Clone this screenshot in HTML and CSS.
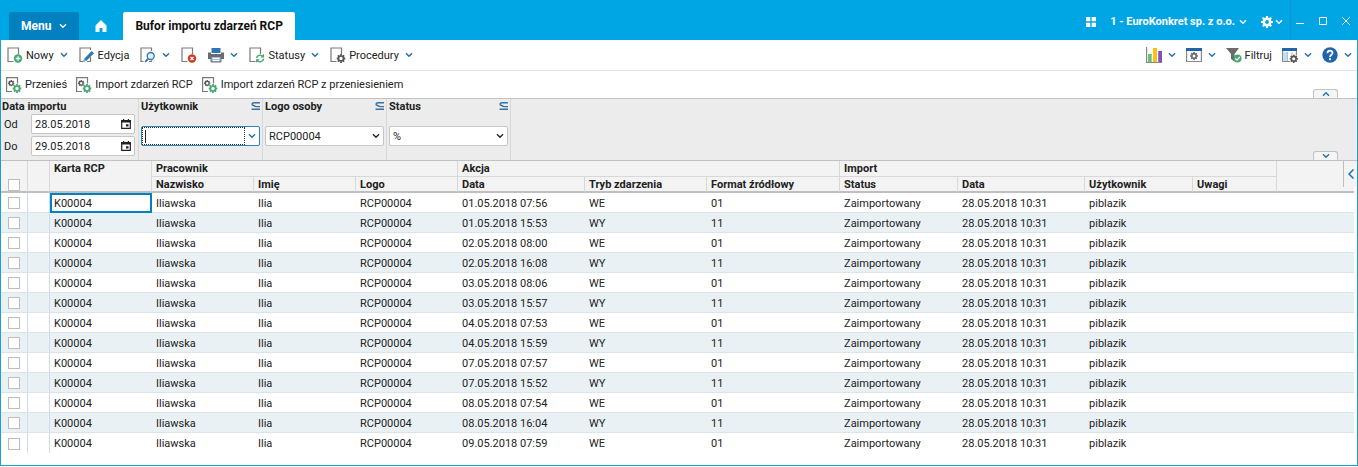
FILE: index.html
```html
<!DOCTYPE html>
<html lang="pl">
<head>
  <meta charset="UTF-8" />
  <meta name="viewport" content="width=device-width, initial-scale=1" />
  <title>Bufor importu zdarzeń RCP</title>
  <link rel="stylesheet" href="styles.css">
</head>
<body>

  <!-- Shared icons -->
  <svg class="sprite" aria-hidden="true">
    <symbol id="chevron" viewBox="0 0 8 6"><path d="M1 1.2 4 4.2 7 1.2" fill="none" stroke="currentColor" stroke-width="1.4" /></symbol>
    <symbol id="gear" viewBox="0 0 10 10">
      <path d="M5 0v2M5 8v2M0 5h2M8 5h2M1.500 1.500l1.500 1.500M7 7l1.500 1.500M8.500 1.500 7 3M3 7 1.500 8.500" stroke="currentColor" stroke-width="2" />
      <circle cx="5" cy="5" r="2.800" fill="#fff" stroke="currentColor" stroke-width="1.800" />
    </symbol>
    <symbol id="page" viewBox="0 0 16 16"><path d="M6.500 14.500H1V1h10.500v6" fill="none" stroke="#7a7a7a" stroke-width="1.200" /></symbol>
    <symbol id="process" viewBox="0 0 16 16">
      <path d="M6 14.500H.6V.6h10.900V6.500" fill="none" stroke="#7a7a7a" stroke-width="1.200" />
      <use href="#gear" x="2" y="3" width="6.500" height="6.500" color="#555" />
      <use href="#gear" x="6.500" y="7" width="9" height="9" color="#44a873" />
    </symbol>
    <symbol id="subset" viewBox="0 0 9 8"><path d="M9 .8H3C.5.8.5 3 2.500 3.500L5 4.600h4M.5 7.200H9" fill="none" stroke="#36719f" stroke-width="1.400" /></symbol>
  </svg>

  <div class="window">

    <header class="titlebar">
      <nav>
        <button class="menu">Menu <svg class="chevron"><use href="#chevron" /></svg></button>
        <a class="home" href="#" aria-label="Start">
          <svg width="12" height="12" viewBox="0 0 12 12"><path d="M6 0 .5 5.500V12h4V8h3v4h4V5.500z" fill="#fff" /></svg>
        </a>
        <a class="tab" href="#">Bufor importu zdarzeń RCP</a>
      </nav>
      <div class="account">
        <button aria-label="Aplikacje"><svg width="10" height="10" viewBox="0 0 10 10"><path d="M0 0h4.300v4.300H0zM5.700 0H10v4.300H5.700zM0 5.700h4.300V10H0zM5.700 5.700H10V10H5.700z" fill="#fff" /></svg></button>
        <button class="company">1 - EuroKonkret sp. z o.o. <svg class="chevron"><use href="#chevron" /></svg></button>
        <button class="settings" aria-label="Ustawienia">
          <svg width="12" height="12" viewBox="0 0 12 12"><path d="M6 0v12M0 6h12M1.800 1.800l8.400 8.400M10.200 1.800l-8.400 8.400" stroke="#fff" stroke-width="2.200" /><circle cx="6" cy="6" r="3.200" fill="#00a5e3" stroke="#fff" stroke-width="2.600" /></svg>
          <svg class="chevron"><use href="#chevron" /></svg>
        </button>
      </div>
      <div class="window-buttons">
        <button aria-label="Minimalizuj"><svg width="8" height="8" viewBox="0 0 8 8"><path d="M0 6.500h8" stroke="#fff" /></svg></button>
        <button aria-label="Maksymalizuj"><svg width="8" height="8" viewBox="0 0 8 8"><path d="M.5.5h7v7h-7z" fill="none" stroke="#fff" /></svg></button>
        <button aria-label="Zamknij"><svg width="8" height="8" viewBox="0 0 8 8"><path d="m.3.3 7.400 7.400M7.700.3.3 7.700" stroke="#fff" /></svg></button>
      </div>
    </header>

    <div class="toolbar main">
      <button>
        <svg class="icon"><use href="#page" /><circle cx="11" cy="11.500" r="4.200" fill="#44a873" /><path d="M11 9.200v4.600M8.700 11.500h4.600" stroke="#fff" stroke-width="1.300" /></svg>
        Nowy <svg class="chevron"><use href="#chevron" /></svg>
      </button>
      <button>
        <svg class="icon"><path d="M4 14.500H1V1h10.500v2M11.500 10v4.500H8" fill="none" stroke="#7a7a7a" stroke-width="1.200" /><path d="m4 15 1.200-3.300L12.700 4 15 6.200 7.500 13.700z" fill="#2f74b5" /><path d="m4 15 1.200-3.300 2.300 2z" fill="#8ab4dc" /></svg>
        Edycja
      </button>
      <button aria-label="Podgląd">
        <svg class="icon"><path d="M3.500 14.500H1V1h10.500v3M11.500 13.500v1H9" fill="none" stroke="#7a7a7a" stroke-width="1.200" /><circle cx="10.700" cy="9" r="3.500" fill="#e2f0fa" stroke="#2f74b5" stroke-width="1.300" /><path d="m8.200 11.600-3 3.200" stroke="#2f74b5" stroke-width="1.800" /></svg>
        <svg class="chevron"><use href="#chevron" /></svg>
      </button>
      <button aria-label="Usuń">
        <svg class="icon"><use href="#page" /><circle cx="11" cy="11.500" r="4.200" fill="#d03a24" /><path d="m9.500 10 3 3m0-3-3 3" stroke="#fff" stroke-width="1.300" /></svg>
      </button>
      <button aria-label="Drukuj">
        <svg class="icon"><path d="M3.500 1h9v5h-9z" fill="#2f74b5" /><path d="M0 5.500h3V7h10V5.500h3V12H0z" fill="#6b6b6b" /><path d="M3 9.500h10V15H3z" fill="#9bc3e6" stroke="#6b6b6b" /><path d="M5 11.500h6M5 13.500h6" stroke="#fff" /></svg>
        <svg class="chevron"><use href="#chevron" /></svg>
      </button>
      <button>
        <svg class="icon"><use href="#page" /><path d="M7.500 11A3.700 3.700 0 0 1 14 9.500M14.700 11.700A3.700 3.700 0 0 1 8.200 13.500" fill="none" stroke="#44a873" stroke-width="1.400" /><path d="M15 6.800v3.700h-3.600zM7 15.800v-3.600h3.600z" fill="#44a873" /></svg>
        Statusy <svg class="chevron"><use href="#chevron" /></svg>
      </button>
      <button>
        <svg class="icon"><use href="#page" /><use href="#gear" x="6.500" y="7" width="9" height="9" color="#555" /></svg>
        Procedury <svg class="chevron"><use href="#chevron" /></svg>
      </button>

      <div class="tools">
        <button aria-label="Wykres">
          <svg class="icon"><path d="M.6 0v15.500H16" fill="none" stroke="#888" stroke-width="1.200" /><path d="M2 7h3.700v8H2z" fill="#6bbd7b" /><path d="M7 1h4v14H7z" fill="#fdc010" /><path d="M12.200 4H16v11h-3.800z" fill="#8052c0" /></svg>
          <svg class="chevron"><use href="#chevron" /></svg>
        </button>
        <button aria-label="Widok">
          <svg class="icon"><path d="M.6 1.500h14.800v13H.6z" fill="#fff" stroke="#888" stroke-width="1.200" /><path d="M0 1h16v3H0z" fill="#1f65ab" /><use href="#gear" x="4" y="5" width="8" height="8" color="#666" /></svg>
          <svg class="chevron"><use href="#chevron" /></svg>
        </button>
        <button>
          <svg class="icon"><path d="M0 1h13L8.500 7v7.500L5 12V7z" fill="#6b6b6b" /><circle cx="11.500" cy="11.500" r="4" fill="#44a873" /><path d="m9.300 11.500 1.700 1.700 2.800-3.200" fill="none" stroke="#fff" stroke-width="1.200" /></svg>
          Filtruj
        </button>
        <button aria-label="Kolumny">
          <svg class="icon"><path d="M8 14.500H.6V1.500h13.800V8" fill="#fff" stroke="#888" stroke-width="1.200" /><path d="M1 5h4v9H1z" fill="#bfe0f5" /><path d="M0 1h15v3H0z" fill="#1f65ab" /><path d="M5.500 5v9M10 5v3" stroke="#bbb" /><use href="#gear" x="7.500" y="7.500" width="8.500" height="8.500" color="#555" /></svg>
          <svg class="chevron"><use href="#chevron" /></svg>
        </button>
        <button aria-label="Pomoc">
          <svg class="icon"><circle cx="8" cy="8" r="7.700" fill="#1f65ab" /><path d="M5.500 6.200C5.500 2.800 10.600 3 10.500 6 10.400 7.700 8 7.800 8 10" fill="none" stroke="#fff" stroke-width="1.800" /><circle cx="8" cy="12.200" r="1.100" fill="#fff" /></svg>
          <svg class="chevron"><use href="#chevron" /></svg>
        </button>
      </div>
    </div>

    <div class="toolbar actions">
      <button><svg class="icon"><use href="#process" /></svg> Przenieś</button>
      <button><svg class="icon"><use href="#process" /></svg> Import zdarzeń RCP</button>
      <button><svg class="icon"><use href="#process" /></svg> Import zdarzeń RCP z przeniesieniem</button>
      <button class="fold" aria-label="Zwiń pasek"><svg class="chevron up"><use href="#chevron" /></svg></button>
    </div>

    <form class="filters">
      <div class="filter dates">
        <div class="filter-title">Data importu</div>
        <div class="date-row">
          <label for="from">Od</label>
          <div class="field">
            <input id="from" type="text" value="28.05.2018">
            <svg class="calendar" viewBox="0 0 10 10"><path d="M.7 1.700h8.600v7.600H.7z" fill="none" stroke="#222" stroke-width="1.200" /><path d="M0 1h10v2.500H0zM2 0h1.200v2H2zM6.800 0H8v2H6.800zM5 5.200h2.500v2.300H5z" fill="#222" /></svg>
          </div>
        </div>
        <div class="date-row">
          <label for="to">Do</label>
          <div class="field">
            <input id="to" type="text" value="29.05.2018">
            <svg class="calendar" viewBox="0 0 10 10"><path d="M.7 1.700h8.600v7.600H.7z" fill="none" stroke="#222" stroke-width="1.200" /><path d="M0 1h10v2.500H0zM2 0h1.200v2H2zM6.800 0H8v2H6.800zM5 5.200h2.500v2.300H5z" fill="#222" /></svg>
          </div>
        </div>
      </div>
      <div class="filter">
        <div class="filter-title"><label for="user">Użytkownik</label> <svg class="operator"><use href="#subset" /></svg></div>
        <div class="field active">
          <input id="user" type="text">
          <span class="caret"></span>
          <button type="button" aria-label="Rozwiń"><svg class="chevron"><use href="#chevron" /></svg></button>
        </div>
      </div>
      <div class="filter">
        <div class="filter-title"><label for="logo">Logo osoby</label> <svg class="operator"><use href="#subset" /></svg></div>
        <div class="field">
          <select id="logo"><option>RCP00004</option></select>
          <svg class="chevron"><use href="#chevron" /></svg>
        </div>
      </div>
      <div class="filter">
        <div class="filter-title"><label for="status">Status</label> <svg class="operator"><use href="#subset" /></svg></div>
        <div class="field">
          <select id="status"><option>%</option></select>
          <svg class="chevron"><use href="#chevron" /></svg>
        </div>
      </div>
      <button type="button" class="fold" aria-label="Zwiń filtry"><svg class="chevron"><use href="#chevron" /></svg></button>
    </form>

    <div class="grid">
      <table>
        <colgroup>
          <col class="c-check"><col class="c-mark"><col class="c-short"><col class="c-short"><col class="c-short"><col class="c-short">
          <col class="c-date"><col class="c-mode"><col class="c-format"><col class="c-status"><col class="c-date">
          <col class="c-user"><col class="c-notes"><col>
        </colgroup>
        <thead>
          <tr>
            <th rowspan="2" class="all"><input type="checkbox" aria-label="Zaznacz wszystkie"></th>
            <th rowspan="2"></th>
            <th rowspan="2" class="tall">Karta RCP</th>
            <th colspan="3">Pracownik</th>
            <th colspan="3">Akcja</th>
            <th colspan="4">Import</th>
            <th rowspan="2"></th>
          </tr>
          <tr>
            <th>Nazwisko</th>
            <th>Imię</th>
            <th>Logo</th>
            <th>Data</th>
            <th>Tryb zdarzenia</th>
            <th>Format źródłowy</th>
            <th>Status</th>
            <th>Data</th>
            <th>Użytkownik</th>
            <th>Uwagi</th>
          </tr>
        </thead>
        <tbody id="rows"></tbody>
      </table>
      <button class="side" aria-label="Pokaż panel"><svg width="8" height="12" viewBox="0 0 8 12"><path d="M6.500 1.500 2 6l4.500 4.500" fill="none" stroke="#1f6fb5" stroke-width="1.500" /></svg></button>
    </div>

  </div>

  <script>
    const events = [
      ['01.05.2018 07:56', 'WE', '01'],
      ['01.05.2018 15:53', 'WY', '11'],
      ['02.05.2018 08:00', 'WE', '01'],
      ['02.05.2018 16:08', 'WY', '11'],
      ['03.05.2018 08:06', 'WE', '01'],
      ['03.05.2018 15:57', 'WY', '11'],
      ['04.05.2018 07:53', 'WE', '01'],
      ['04.05.2018 15:59', 'WY', '11'],
      ['07.05.2018 07:57', 'WE', '01'],
      ['07.05.2018 15:52', 'WY', '11'],
      ['08.05.2018 07:54', 'WE', '01'],
      ['08.05.2018 16:04', 'WY', '11'],
      ['09.05.2018 07:59', 'WE', '01']
    ];

    const rows = document.getElementById('rows');

    events.forEach((event, i) => {
      const cells = ['K00004', 'Iliawska', 'Ilia', 'RCP00004', ...event,
        'Zaimportowany', '28.05.2018 10:31', 'piblazik', '', ''];
      const tr = document.createElement('tr');
      tr.innerHTML = '<td><input type="checkbox" aria-label="Zaznacz wiersz ' + (i + 1) + '"></td><td></td>' +
        cells.map(text => '<td>' + text + '</td>').join('');
      rows.appendChild(tr);
    });

    rows.rows[0].cells[2].classList.add('current');
  </script>

</body>
</html>
```
FILE: styles.css
```css
* {
  box-sizing: border-box;
  margin: 0;
  padding: 0;
}

body {
  font-family: Roboto, sans-serif;
  font-size: 11px;
  color: #222;
  background-color: #fff;
}

button,
input,
select {
  font: inherit;
  color: inherit;
  border: none;
  background: none;
}

button {
  display: flex;
  align-items: center;
  cursor: pointer;
  white-space: nowrap;
}

a {
  color: inherit;
  text-decoration: none;
}

svg {
  display: block;
  flex: none;
}

.sprite {
  position: absolute;
  width: 0;
  height: 0;
}

.icon {
  width: 16px;
  height: 16px;
}

.chevron {
  width: 8px;
  height: 6px;
  color: #1f6fb5;
}

.chevron.up {
  transform: rotate(180deg);
}

.window {
  display: flex;
  flex-direction: column;
  min-height: calc(100vh - 1px);
  border: 1px solid #1b9fd0;
  border-top: none;
}

/* Title bar */
.titlebar {
  display: flex;
  height: 40px;
  margin: 0 -1px;
  background-color: #00a5e3;
  color: #fff;
  font-weight: bold;
}

.titlebar nav {
  display: flex;
  flex: 1;
  padding: 12px 0 0 9px;
  font-size: 12px;
}

.titlebar .chevron {
  color: #fff;
}

.menu {
  gap: 8px;
  padding: 0 12px;
  background-color: #0380bf;
  border-radius: 2px 2px 0 0;
}

.home {
  display: flex;
  align-items: center;
  padding: 0 16px;
}

.tab {
  display: flex;
  align-items: center;
  padding: 0 12px;
  background-color: #fff;
  border-radius: 2px 2px 0 0;
  color: #111;
}

.account {
  display: flex;
  align-items: center;
  gap: 14px;
  padding: 3px 7px 0 0;
}

.company {
  gap: 4px;
}

.settings {
  gap: 2px;
}

.window-buttons {
  display: flex;
  align-items: center;
  gap: 15px;
  padding: 1px 8px 0 5px;
  border-left: 1px solid #0c96cd;
}

/* Toolbars */
.toolbar {
  position: relative;
  display: flex;
  align-items: center;
}

.toolbar button {
  gap: 3px;
}

.main {
  gap: 11px;
  height: 31px;
  padding: 0 5px 0 6px;
  border-bottom: 1px solid #e4e4e4;
}

.main button .chevron {
  margin-left: 3px;
}

.tools {
  display: flex;
  gap: 10px;
  margin-left: auto;
}

.actions {
  gap: 9px;
  height: 27px;
  padding: 0 5px;
}

.fold {
  position: absolute;
  right: 19px;
  bottom: 0;
  justify-content: center;
  width: 25px;
  height: 9px;
  background-color: #f5f5f5;
  border: 1px solid #c2c2c2;
  border-bottom: none;
  border-radius: 3px 3px 0 0;
}

/* Filters */
.filters {
  position: relative;
  display: flex;
  height: 63px;
  background-color: #ececec;
  border-top: 1px solid #c2c2c2;
  border-bottom: 1px solid #c2c2c2;
}

.filter {
  width: 124px;
  padding: 0 2px;
  border-right: 1px solid #d8d8d8;
}

.filter.dates {
  width: 138px;
  padding: 0 3px 0 1px;
}

.filter-title {
  display: flex;
  align-items: center;
  justify-content: space-between;
  height: 14px;
  font-weight: bold;
}

.filter .field {
  margin-top: 13px;
}

.operator {
  width: 9px;
  height: 8px;
}

.date-row {
  display: flex;
  align-items: center;
  height: 22px;
  padding-left: 2px;
}

.date-row label {
  flex: none;
  width: 27px;
}

.date-row .field {
  flex: 1;
  min-width: 0;
  margin-top: 0;
}

.field {
  position: relative;
  display: flex;
  align-items: center;
  height: 20px;
  background-color: #fff;
  border: 1px solid #c6c6c6;
  border-radius: 2px;
}

.field input,
.field select {
  flex: 1;
  min-width: 0;
  height: 18px;
  padding: 0 3px;
  appearance: none;
  outline: none;
}

.calendar {
  width: 10px;
  height: 10px;
  margin-right: 3px;
}

.field > .chevron {
  margin-right: 3px;
  color: #222;
}

.active {
  border-color: #2b82bd;
}

.active input {
  border: 1px dotted #333;
}

.active button {
  justify-content: center;
  width: 14px;
}

.caret {
  position: absolute;
  left: 3px;
  width: 1px;
  height: 13px;
  background-color: #222;
}

/* Grid */
.grid {
  position: relative;
  padding-right: 3px;
}

table {
  width: 100%;
  table-layout: fixed;
  border-collapse: separate;
  border-spacing: 0;
}

.c-check {
  width: 27px;
}

.c-mark {
  width: 22px;
}

.c-short {
  width: 102px;
}

.c-date {
  width: 127px;
}

.c-mode {
  width: 122px;
}

.c-format {
  width: 133px;
}

.c-status {
  width: 118px;
}

.c-user {
  width: 108px;
}

.c-notes {
  width: 84px;
}

th {
  height: 16px;
  padding: 0 4px;
  background-color: #f3f3f3;
  border-right: 1px solid #d8d8d8;
  border-bottom: 1px solid #d8d8d8;
  text-align: left;
  white-space: nowrap;
}

th[rowspan],
tr + tr th {
  border-bottom: 2px solid #bfbfbf;
}

th:last-child[rowspan] {
  border-right: none;
}

.tall {
  padding-top: 1px;
  vertical-align: top;
}

.all {
  vertical-align: bottom;
}

td {
  height: 20px;
  padding: 1px 4px 0;
  border-bottom: 1px solid #dbe4ea;
  white-space: nowrap;
}

tbody tr:nth-child(even) {
  background-color: #e9f1f5;
}

tbody tr:last-child td {
  border-bottom: none;
}

td:nth-child(-n+2) {
  border-right: 1px solid #cbdcee;
}

.current {
  background-color: #fff;
  outline: 2px solid #0380bf;
  outline-offset: -2px;
}

td input,
th input {
  display: block;
  width: 12px;
  height: 12px;
  margin-left: 3px;
  appearance: none;
  background-color: #fff;
  border: 1px solid #bdbdbd;
}

.side {
  position: absolute;
  top: 0;
  right: 0;
  justify-content: center;
  width: 14px;
  height: 26px;
  background-color: #f3f3f3;
  border-left: 1px solid #bfbfbf;
}
```
